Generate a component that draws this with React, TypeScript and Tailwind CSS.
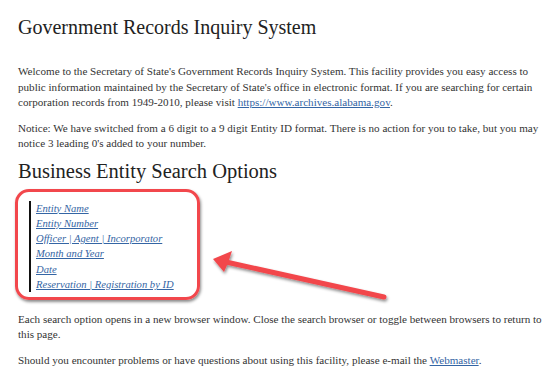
import React from "react";

const serif = { fontFamily: '"Liberation Serif", "DejaVu Serif", serif' };

export default function App() {
  return (
    <div className="relative w-[550px] h-[388px] overflow-hidden bg-white text-[#333]" style={serif}>
      <div className="pl-[18px] pr-[10px] pt-[13px] whitespace-nowrap">
        <h1 className="text-[20px] leading-[28px] text-[#222]">Government Records Inquiry System</h1>
        <p className="mt-[23px] text-[11.1px] leading-[15.5px]">
          Welcome to the Secretary of State's Government Records Inquiry System. This facility provides you easy access to
          <br />
          public information maintained by the Secretary of State's office in electronic format. If you are searching for certain
          <br />
          corporation records from 1949-2010, please visit{" "}
          <a className="text-[#3465a4] underline">https://www.archives.alabama.gov</a>.
        </p>
        <p className="mt-[10px] text-[11.1px] leading-[15.5px]">
          Notice: We have switched from a 6 digit to a 9 digit Entity ID format. There is no action for you to take, but you may
          <br />
          notice 3 leading 0's added to your number.
        </p>
        <h2 className="mt-[5px] text-[20.5px] leading-[28px] text-[#222]">Business Entity Search Options</h2>
        <div className="mt-[4px] -ml-[3px] w-[185px] h-[111px] rounded-[14px] border-[3px] border-[#f2474c] shadow-[1px_2px_3px_rgba(0,0,0,0.45)] pl-[11px] pt-[9px]">
          <ul className="border-l-[2px] border-[#111] pl-[5px] text-[10.6px] leading-[15.3px] italic">
            <li><a className="text-[#3465a4] underline">Entity Name</a></li>
            <li><a className="text-[#3465a4] underline">Entity Number</a></li>
            <li><a className="text-[#3465a4] underline">Officer | Agent | Incorporator</a></li>
            <li><a className="text-[#3465a4] underline">Month and Year</a></li>
            <li><a className="text-[#3465a4] underline">Date</a></li>
            <li><a className="text-[#3465a4] underline">Reservation | Registration by ID</a></li>
          </ul>
        </div>
        <p className="mt-[12px] text-[11.1px] leading-[15.5px]">
          Each search option opens in a new browser window. Close the search browser or toggle between browsers to return to
          <br />
          this page.
        </p>
        <p className="mt-[10px] text-[11.1px] leading-[15.5px]">
          Should you encounter problems or have questions about using this facility, please e-mail the{" "}
          <a className="text-[#3465a4] underline">Webmaster</a>.
        </p>
      </div>
      <svg className="absolute left-0 top-0" width="550" height="388" viewBox="0 0 550 388">
        <defs>
          <filter id="sh" x="-10%" y="-10%" width="120%" height="130%">
            <feDropShadow dx="1" dy="2" stdDeviation="1.5" floodColor="#000" floodOpacity="0.45" />
          </filter>
        </defs>
        <g filter="url(#sh)">
          <line x1="384" y1="297" x2="226" y2="262" stroke="#f2474c" strokeWidth="5" strokeLinecap="round" />
          <polygon points="213,259 232,251 228,263 224,272" fill="#f2474c" />
        </g>
      </svg>
    </div>
  );
}
